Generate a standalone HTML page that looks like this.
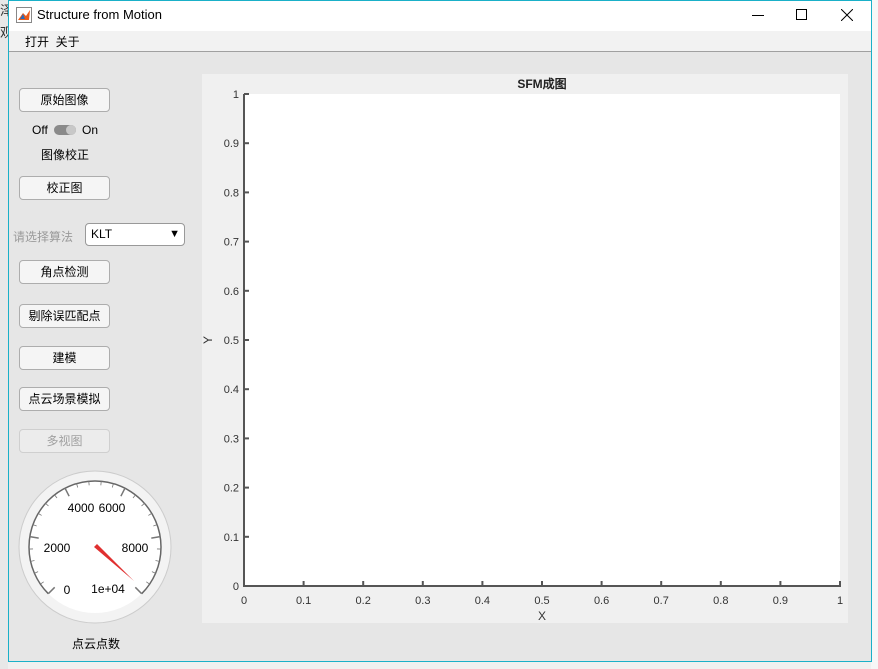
<!DOCTYPE html>
<html><head><meta charset="utf-8"><style>
*{margin:0;padding:0;box-sizing:border-box}
body{width:878px;height:669px;overflow:hidden;background:#f0f0f0;position:relative;font-family:"Liberation Sans","Noto Sans CJK SC",sans-serif;font-size:12px;color:#000}
.a{position:absolute}
.btn{position:absolute;left:19px;width:91px;height:24px;border:1px solid #adadad;border-radius:4px;background:#f5f5f5;text-align:center;line-height:22px;font-size:12px}
</style></head><body>
<div class="a" style="left:0;top:0;width:8px;height:669px;background:#e8e8e8"></div>
<div class="a" style="left:0;top:22px;font-size:13px;color:#333">观</div>
<div class="a" style="left:0;top:0;font-size:13px;color:#333">泽</div>
<div class="a" style="left:871px;top:0;width:7px;height:669px;background:#f7f7f7"></div>
<div class="a" style="left:8px;top:0;width:864px;height:662px;border:1px solid #1ab0c8;background:#e6e6e6"></div>
<div class="a" style="left:9px;top:1px;width:862px;height:30px;background:#fff"></div>
<svg class="a" style="left:16px;top:7px" width="16" height="16"><rect x="0.5" y="0.5" width="15" height="15" fill="#fff" stroke="#888"/><path d="M2 13 L7 6 L10 9 L14 3 L13 13Z" fill="#e8591a"/><path d="M4 12 L7 7 L9 12Z" fill="#2a6ab8"/></svg>
<div class="a" style="left:37px;top:7px;font-size:13px">Structure from Motion</div>
<div class="a" style="left:752px;top:15px;width:12px;height:1px;background:#000"></div>
<div class="a" style="left:796px;top:9px;width:11px;height:11px;border:1px solid #000"></div>
<svg class="a" style="left:841px;top:9px" width="12" height="12"><path d="M0 0L12 12M12 0L0 12" stroke="#000" stroke-width="1"/></svg>
<div class="a" style="left:9px;top:31px;width:862px;height:21px;background:#f2f2f2;border-bottom:1px solid #a0a0a0"></div>
<div class="a" style="left:25px;top:33px;font-size:12px">打开&nbsp;&nbsp;关于</div>

<div class="btn" style="top:88px">原始图像</div>
<div class="a" style="left:32px;top:123px">Off</div>
<div class="a" style="left:54px;top:125px;width:22px;height:10px;border-radius:5px;background:#8a8a8a"></div>
<div class="a" style="left:66px;top:125px;width:10px;height:10px;border-radius:5px;background:#c8c8c8"></div>
<div class="a" style="left:82px;top:123px">On</div>
<div class="a" style="left:41px;top:146px">图像校正</div>
<div class="btn" style="top:176px">校正图</div>
<div class="a" style="left:13px;top:228px;color:#9a9a9a">请选择算法</div>
<div class="a" style="left:85px;top:223px;width:100px;height:23px;border:1px solid #999;border-radius:4px;background:#fff;padding-left:5px;line-height:21px">KLT<span style="position:absolute;right:4px;top:0;font-size:11px">▼</span></div>
<div class="btn" style="top:260px">角点检测</div>
<div class="btn" style="top:304px">剔除误匹配点</div>
<div class="btn" style="top:346px">建模</div>
<div class="btn" style="top:387px">点云场景模拟</div>
<div class="btn" style="top:429px;color:#a0a0a0;border-color:#cfcfcf;background:#ececec">多视图</div>

<svg class="a" style="left:15px;top:468px" width="162" height="162" font-family="Liberation Sans" font-size="12">
<circle cx="80" cy="79" r="76" fill="#f3f3f3" stroke="#ccc"/>
<circle cx="80" cy="79" r="66" fill="#fff"/>
<path d="M33.3 125.7 A66 66 0 1 1 126.7 125.7" fill="none" stroke="#666" stroke-width="1.5"/>
<g id="ticks" stroke="#777"></g>
<text x="52" y="126" text-anchor="middle">0</text>
<text x="42" y="84" text-anchor="middle">2000</text>
<text x="66" y="44" text-anchor="middle">4000</text>
<text x="97" y="44" text-anchor="middle">6000</text>
<text x="120" y="84" text-anchor="middle">8000</text>
<text x="93" y="125" text-anchor="middle">1e+04</text>
<path d="M79 79 L82 76 L119 113Z" fill="#e03030"/>
</svg>
<script>
(function(){var g=document.getElementById('ticks'),s='';for(var i=0;i<=25;i++){var a=(-135+270*i/25)*Math.PI/180,maj=i%5==0,r1=66,r2=maj?57:62;var cx=80,cy=79;s+='<line x1="'+(cx+r1*Math.sin(a))+'" y1="'+(cy-r1*Math.cos(a))+'" x2="'+(cx+r2*Math.sin(a))+'" y2="'+(cy-r2*Math.cos(a))+'" stroke-width="'+(maj?1.5:0.8)+'"/>';}g.innerHTML=s;})();
</script>
<div class="a" style="left:72px;top:635px">点云点数</div>

<svg class="a" style="left:202px;top:74px" width="646" height="549" font-family="Liberation Sans" font-size="11" fill="#333">
<rect width="646" height="549" fill="#f0f0f0"/>
<rect x="42" y="20" width="596" height="492" fill="#fff"/>
<text x="340" y="14" text-anchor="middle" font-weight="bold" font-size="12" fill="#222">SFM成图</text>
<g id="ax" stroke="#555"></g>
<path d="M42 20 V512 H638 V508" fill="none" stroke="#555" stroke-width="2"/>
<text x="340" y="546" text-anchor="middle" font-size="12">X</text>
<text x="10" y="266" text-anchor="middle" font-size="12" transform="rotate(-90 10 266)">Y</text>
</svg>
<script>
(function(){var g=document.getElementById('ax'),svg=g.parentNode,s='',t='';for(var i=0;i<=10;i++){var y=512-49.2*i,x=42+59.6*i,l=(i==0?'0':i==10?'1':'0.'+i);s+='<line x1="42" y1="'+y+'" x2="47" y2="'+y+'" stroke-width="2"/><line x1="'+x+'" y1="512" x2="'+x+'" y2="507" stroke-width="2"/>';t+='<text x="37" y="'+(y+4)+'" text-anchor="end">'+l+'</text><text x="'+x+'" y="530" text-anchor="middle">'+l+'</text>';}g.innerHTML=s;svg.insertAdjacentHTML('beforeend',t);})();
</script>
</body></html>
